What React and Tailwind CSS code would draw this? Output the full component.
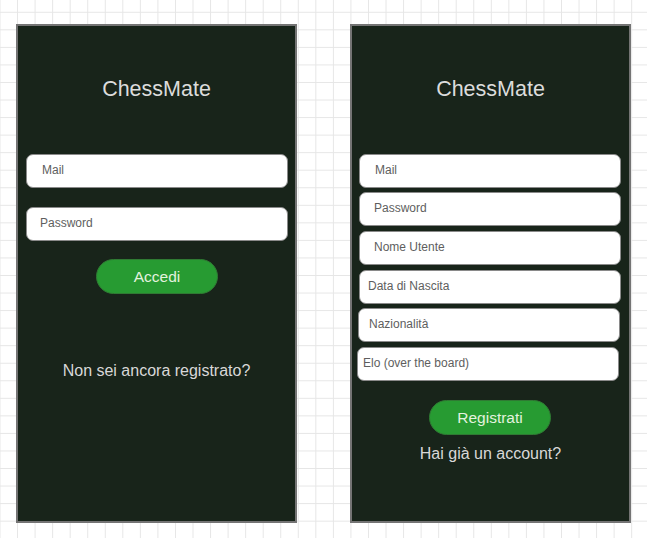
import React from "react";

const font = { fontFamily: '"Liberation Sans", Arial, sans-serif' };

function Field({ label, className }) {
  return (
    <div
      className={
        "h-[34px] w-[262px] shrink-0 rounded-[7px] border border-[#8a8a8a] bg-white flex items-center pb-[2px] text-[12px] leading-[14px] text-[#5e5e5e] " +
        className
      }
    >
      {label}
    </div>
  );
}

function Pill({ label, className }) {
  return (
    <div
      className={
        "h-[35px] w-[122px] shrink-0 rounded-full border border-[#2f7a33] bg-[#279b32] flex items-center justify-center text-[15.5px] text-[#e3f2df] " +
        className
      }
    >
      {label}
    </div>
  );
}

function Panel({ children }) {
  return (
    <div className="w-[281px] h-[499px] shrink-0 border-2 border-[#747474] bg-[#18241a] flex flex-col pt-[51px]">
      <div className="h-[24px] leading-[24px] text-[21.5px] text-center text-[#dcdcdc]">
        ChessMate
      </div>
      {children}
    </div>
  );
}

export default function App() {
  return (
    <div
      style={font}
      className="min-h-screen w-full bg-white bg-[linear-gradient(to_right,#e6e6e6_1px,transparent_1px),linear-gradient(to_bottom,#e6e6e6_1px,transparent_1px)] bg-[size:17.55px_17.55px] bg-[position:-0.5px_11.8px] flex items-start gap-[53px] pl-[16px] pt-[24px]"
    >
      <Panel>
        <Field label="Mail" className="mt-[53px] ml-[8px] pl-[15px]" />
        <Field label="Password" className="mt-[19px] ml-[8px] pl-[13px]" />
        <Pill label="Accedi" className="mt-[18px] ml-[78px]" />
        <div className="mt-[67px] h-[20px] leading-[20px] text-[16px] text-center text-[#d8d8d8]">
          Non sei ancora registrato?
        </div>
      </Panel>
      <Panel>
        <Field label="Mail" className="mt-[53px] ml-[7px] pl-[15px]" />
        <Field label="Password" className="mt-[4px] ml-[7px] pl-[14px]" />
        <Field label="Nome Utente" className="mt-[5px] ml-[7px] pl-[14px]" />
        <Field label="Data di Nascita" className="mt-[5px] ml-[7px] pl-[8px]" />
        <Field label="Nazionalità" className="mt-[4px] ml-[6px] pl-[10px]" />
        <Field label="Elo (over the board)" className="mt-[5px] ml-[5px] pl-[5px]" />
        <Pill label="Registrati" className="mt-[19px] ml-[77px]" />
        <div className="mt-[9px] h-[20px] leading-[20px] text-[16px] text-center text-[#d8d8d8]">
          Hai già un account?
        </div>
      </Panel>
    </div>
  );
}
